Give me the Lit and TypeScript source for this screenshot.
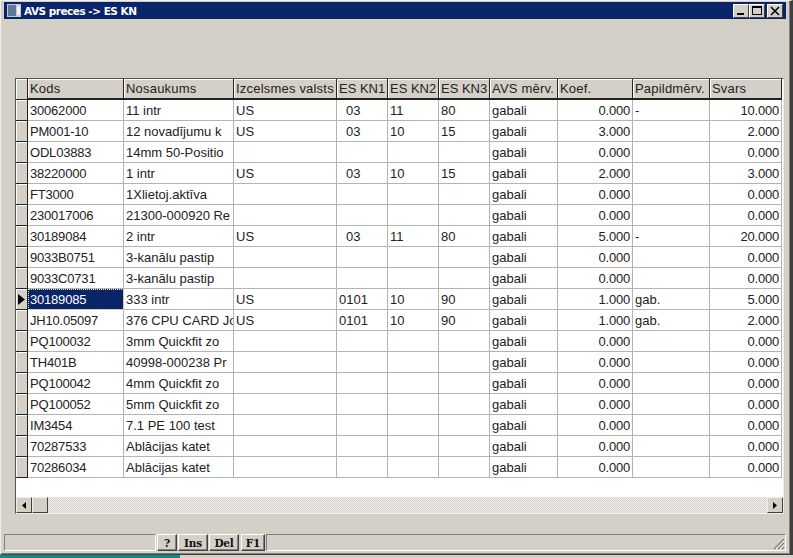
import { LitElement, html, css } from "lit";
import { customElement } from "lit/decorators.js";

const head = ["Kods","Nosaukums","Izcelsmes valsts","ES KN1","ES KN2","ES KN3","AVS mērv.","Koef.","Papildmērv.","Svars"];
const rows: string[][] = [
["30062000","11 intr","US","03","11","80","gabali","0.000","-","10.000"],
["PM001-10","12 novadījumu k","US","03","10","15","gabali","3.000","","2.000"],
["ODL03883","14mm 50-Positio","","","","","gabali","0.000","","0.000"],
["38220000","1 intr","US","03","10","15","gabali","2.000","","3.000"],
["FT3000","1Xlietoj.aktīva","","","","","gabali","0.000","","0.000"],
["230017006","21300-000920 Re","","","","","gabali","0.000","","0.000"],
["30189084","2 intr","US","03","11","80","gabali","5.000","-","20.000"],
["9033B0751","3-kanālu pastip","","","","","gabali","0.000","","0.000"],
["9033C0731","3-kanālu pastip","","","","","gabali","0.000","","0.000"],
["30189085","333 intr","US","0101","10","90","gabali","1.000","gab.","5.000"],
["JH10.05097","376 CPU CARD Jo","US","0101","10","90","gabali","1.000","gab.","2.000"],
["PQ100032","3mm Quickfit zo","","","","","gabali","0.000","","0.000"],
["TH401B","40998-000238 Pr","","","","","gabali","0.000","","0.000"],
["PQ100042","4mm Quickfit zo","","","","","gabali","0.000","","0.000"],
["PQ100052","5mm Quickfit zo","","","","","gabali","0.000","","0.000"],
["IM3454","7.1 PE 100 test","","","","","gabali","0.000","","0.000"],
["70287533","Ablācijas katet","","","","","gabali","0.000","","0.000"],
["70286034","Ablācijas katet","","","","","gabali","0.000","","0.000"],
];

@customElement("app-root")
export class AppRoot extends LitElement {
  static styles = css`
    :host { display: block; width: 793px; height: 558px; overflow: hidden; background: #d4d0c8; font-family: "Liberation Sans", Arial, sans-serif; font-size: 13px; color: #111; }
    .window { box-sizing: border-box; height: 555px; padding: 1px 4px 0 4px; display: flex; flex-direction: column; background: #d4d0c8;
      border-right: 3px solid #404040; border-bottom: 1px solid #404040; border-left: 1px solid #eee; border-top: 1px solid #eee; box-shadow: inset -1px -1px 0 #808080; }
    .title { height: 17px; flex: none; margin-left: -1px; background: #0a246a; color: #fff; display: flex; align-items: center; padding: 0 3px 0 3px; gap: 3px; font: bold 10.5px "DejaVu Sans", sans-serif; }
    .title .name { flex: 1; letter-spacing: -0.5px; }
    .wbtn { width: 16px; height: 14px; box-sizing: border-box; background: #d4d0c8; border: 1px solid; border-color: #fff #404040 #404040 #fff; display: block; }
    .wbtns { display: flex; gap: 0; }
    .wbtns .wbtn:last-child { margin-left: 2px; }
    .app-ico { width: 14px; height: 13px; display: block; }
    .spacer { height: 59px; flex: none; }
    .grid { box-sizing: border-box; width: 769px; height: 436px; margin-left: 10px; flex: none; display: flex; flex-direction: column; border: 1px solid; border-color: #555 #eee #eee #555; background: #fff; }
    .table { flex: 1; overflow: hidden; }
    .row { display: grid; grid-template-columns: 12px 96px 110px 103px 51px 51px 51px 68px 75px 77px 72px; height: 21px; }
    .hrow { height: 21px; }
    .c { box-sizing: border-box; border-right: 1px solid #b4b4b4; border-bottom: 1px solid #b4b4b4; padding: 1px 2px 0; line-height: 20px; white-space: nowrap; overflow: hidden; color: #222; }
    .r { text-align: right; padding-right: 2px; letter-spacing: -0.2px; }
    .code { letter-spacing: -0.2px; }
    .ctr { padding-left: 9px; }
    .h { background: #d4d0c8; border-right: 1px solid #222; border-bottom: 2px solid #222; box-shadow: inset 1px 1px 0 #fff; padding: 0 0 0 2px; line-height: 19px; letter-spacing: 0.2px; color: #222; }
    .h.tight { letter-spacing: 0; }
    .ind { background: #d4d0c8; border-right: 1px solid #222; border-bottom: 1px solid #222; box-shadow: inset 1px 1px 0 #fff; padding: 0; display: flex; align-items: center; justify-content: center; }
    .sel { background: #0a246a; color: #fff; outline: 1px dotted #e8e8a0; outline-offset: -1px; }
    .tri { width: 7px; height: 11px; display: block; }
    .sb { height: 16px; flex: none; display: flex; justify-content: space-between; align-items: stretch; background-color: #e6e4df; background-image: repeating-conic-gradient(#d4d0c8 0 25%, #f2f1ee 0 50%); background-size: 2px 2px; }
    .sbgroup { display: flex; }
    .sbb { width: 16px; box-sizing: border-box; background: #d4d0c8; border: 1px solid; border-color: #eee #404040 #404040 #eee; display: flex; align-items: center; justify-content: center; }
    .sbb svg { width: 4px; height: 7px; display: block; }
    .gap { height: 20px; flex: none; }
    .status { height: 17px; flex: none; margin-left: -1px; display: flex; gap: 1px; font: bold 10.5px "DejaVu Serif", serif; letter-spacing: -0.2px; color: #111; }
    .panel { box-sizing: border-box; border: 1px solid; border-color: #808080 #fff #fff #808080; }
    .p1 { width: 152px; }
    .p2 { flex: 1; position: relative; }
    .grip { position: absolute; right: 0; bottom: 0; width: 13px; height: 13px; display: block; }
    button { all: unset; box-sizing: border-box; text-align: center; font: inherit; height: 17px; line-height: 14px; background: #d4d0c8; border: 1px solid; border-color: #fff #404040 #404040 #fff; box-shadow: inset -1px -1px 0 #808080; }
    .b-q { width: 20px; }
    .b-w { width: 30px; }
    .b-f { width: 24px; margin-left: 1px; }
    .taskbar { height: 3px; background: #d4d0c8; }
    .teal { width: 180px; height: 3px; background: #0e8c80; }
  `;
  render() {
    return html`
      <div class="window">
        <div class="title">
          <svg class="app-ico" viewBox="0 0 14 13"><rect width="14" height="13" fill="#c8c8c8"/><rect x="1" y="1" width="8" height="11" fill="#5a7a98"/><rect x="10" y="2" width="3" height="9" fill="#eef"/></svg>
          <span class="name">AVS preces -&gt; ES KN</span>
          <div class="wbtns">
            <span class="wbtn"><svg viewBox="0 0 14 12" width="14" height="12"><rect x="3" y="8" width="7" height="2" fill="#000"/></svg></span>
            <span class="wbtn"><svg viewBox="0 0 14 12" width="14" height="12"><path d="M2 1h10v9H2zM3 3v6h8V3z" fill="#000" fill-rule="evenodd"/></svg></span>
            <span class="wbtn"><svg viewBox="0 0 14 12" width="14" height="12"><path d="M3 2l8 8M11 2l-8 8" stroke="#000" stroke-width="1.6" fill="none"/></svg></span>
          </div>
        </div>
        <div class="spacer"></div>
        <div class="grid">
          <div class="table">
            <div class="row hrow">
              <div class="c ind"></div>
              ${head.map((h, j) => html`<div class="c h ${j >= 3 && j <= 5 ? "tight" : ""}">${h}</div>`)}
            </div>
            ${rows.map((r, i) => html`
              <div class="row">
                <div class="c ind">${i === 9 ? html`<svg class="tri" viewBox="0 0 7 11"><path d="M0 0l7 5.5L0 11z" fill="#000"/></svg>` : ""}</div>
                ${r.map((v, j) => html`<div class="c ${j === 0 ? "code" : ""} ${j === 0 && i === 9 ? "sel" : ""} ${j === 7 || j === 9 ? "r" : ""} ${j === 3 && v === "03" ? "ctr" : ""}">${v}</div>`)}
              </div>`)}
          </div>
          <div class="sb">
            <div class="sbgroup">
              <div class="sbb"><svg viewBox="0 0 4 7"><path d="M4 0v7L0 3.5z" fill="#000"/></svg></div>
              <div class="sbb"></div>
            </div>
            <div class="sbb"><svg viewBox="0 0 4 7"><path d="M0 0v7l4-3.5z" fill="#000"/></svg></div>
          </div>
        </div>
        <div class="gap"></div>
        <div class="status">
          <div class="panel p1"></div>
          <button class="b-q">?</button>
          <button class="b-w">Ins</button>
          <button class="b-w">Del</button>
          <button class="b-f">F1</button>
          <div class="panel p2">
            <svg class="grip" viewBox="0 0 13 13"><path d="M12 2L2 12M12 6L6 12M12 10L10 12" stroke="#808080" stroke-width="1.4"/><path d="M12 4L4 12M12 8L8 12" stroke="#fff"/></svg>
          </div>
        </div>
      </div>
      <div class="taskbar"><div class="teal"></div></div>
    `;
  }
}
